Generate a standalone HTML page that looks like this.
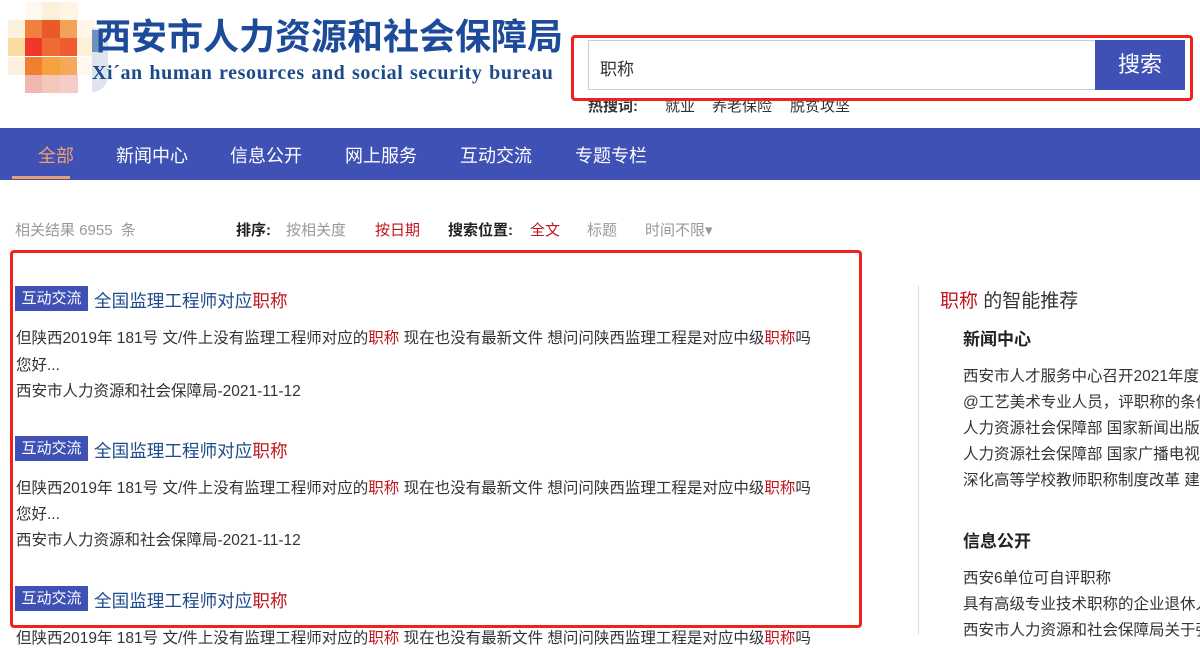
<!DOCTYPE html>
<html><head><meta charset="utf-8"><style>
*{margin:0;padding:0;box-sizing:border-box}
body{width:1200px;height:635px;overflow:hidden;background:#fff;font-family:"Liberation Sans","Noto Sans CJK SC",sans-serif;position:relative;color:#333}
.a{position:absolute;white-space:nowrap}
.c{position:absolute;width:18px;height:18px}
.nav{position:absolute;left:0;top:128px;width:1200px;height:52px;background:#3f51b5}
.nav span{position:absolute;top:14px;font-size:18px;color:#fff}
.tag{position:absolute;left:15px;width:73px;height:25px;background:#3f51b5;color:#fff;font-size:15px;line-height:25px;text-align:center}
.tt{position:absolute;left:94px;font-size:17.6px;color:#1e4a8a;white-space:nowrap}
.r{color:#c0141c}
.p{position:absolute;left:16px;font-size:15.5px;color:#333;white-space:nowrap}
.rl{position:absolute;left:963px;font-size:15.5px;color:#333}
.f{position:absolute;top:219px;font-size:15px;color:#999;white-space:nowrap}
</style></head><body>
<div class="c" style="left:25px;top:2px;background:#fff8f0"></div>
<div class="c" style="left:42px;top:2px;background:#fdf0d8"></div>
<div class="c" style="left:60px;top:2px;background:#fff4e4"></div>
<div class="c" style="left:8px;top:20px;background:#fdf0dc"></div>
<div class="c" style="left:25px;top:20px;background:#f08040"></div>
<div class="c" style="left:42px;top:20px;background:#e85a2a"></div>
<div class="c" style="left:60px;top:20px;background:#f2a258"></div>
<div class="c" style="left:77px;top:20px;background:#fff6e8"></div>
<div class="c" style="left:8px;top:38px;background:#f9dca0"></div>
<div class="c" style="left:25px;top:38px;background:#f0382a"></div>
<div class="c" style="left:42px;top:38px;background:#f06a34"></div>
<div class="c" style="left:60px;top:38px;background:#f05a30"></div>
<div class="c" style="left:77px;top:38px;background:#fdf0d8"></div>
<div class="c" style="left:8px;top:57px;background:#fdf0e0"></div>
<div class="c" style="left:25px;top:57px;background:#f08030"></div>
<div class="c" style="left:42px;top:57px;background:#f6a040"></div>
<div class="c" style="left:60px;top:57px;background:#f4a858"></div>
<div class="c" style="left:77px;top:57px;background:#fff8f0"></div>
<div class="c" style="left:25px;top:75px;background:#f2b8b0"></div>
<div class="c" style="left:42px;top:75px;background:#f4c8b8"></div>
<div class="c" style="left:60px;top:75px;background:#f4ccc8"></div>
<div style="position:absolute;left:92px;top:28px;width:16px;height:64px;background:#dde4ee;border-radius:0 16px 16px 0"></div>
<div style="position:absolute;left:92px;top:30px;width:8px;height:22px;background:#7090c0"></div>
<div class="a" style="left:95px;top:13px;font-size:36px;font-weight:bold;color:#1e4a9a;line-height:48px">西安市人力资源和社会保障局</div>
<div class="a" style="left:92px;top:61px;font-family:'Liberation Serif',serif;font-size:20px;font-weight:bold;color:#1e4a8a;line-height:24px;letter-spacing:0.6px;word-spacing:1px">Xi´an human resources and social security bureau</div>
<div class="a" style="left:588px;top:95px;font-size:15px;color:#333;font-weight:bold">热搜词:</div>
<div class="a" style="left:665px;top:95px;font-size:15px;color:#333">就业</div>
<div class="a" style="left:712px;top:95px;font-size:15px;color:#333">养老保险</div>
<div class="a" style="left:790px;top:95px;font-size:15px;color:#333">脱贫攻坚</div>
<div style="position:absolute;left:571px;top:35px;width:622px;height:66px;border:3px solid #f0221a;border-radius:4px;background:#fff"></div>
<div style="position:absolute;left:588px;top:40px;width:507px;height:50px;border:1px solid #ccc;border-right:none;background:#fff"></div>
<div class="a" style="left:600px;top:55px;font-size:17px;color:#333">职称</div>
<div style="position:absolute;left:1095px;top:40px;width:90px;height:50px;background:#3f51b5;color:#fff;font-size:22px;line-height:50px;text-align:center">搜索</div>
<div class="nav">
<span style="left:38px;color:#f0a070">全部</span>
<span style="left:116px">新闻中心</span>
<span style="left:230px">信息公开</span>
<span style="left:345px">网上服务</span>
<span style="left:460px">互动交流</span>
<span style="left:575px">专题专栏</span>
<div style="position:absolute;left:12px;top:48px;width:58px;height:3px;background:#e8a070"></div>
</div>
<div class="f" style="left:15px">相关结果 6955&nbsp; 条</div>
<div class="f" style="left:236px;color:#222;font-weight:bold">排序:</div>
<div class="f" style="left:286px">按相关度</div>
<div class="f" style="left:375px;color:#c0141c">按日期</div>
<div class="f" style="left:448px;color:#222;font-weight:bold">搜索位置:</div>
<div class="f" style="left:530px;color:#c0141c">全文</div>
<div class="f" style="left:587px">标题</div>
<div class="f" style="left:645px">时间不限▾</div>
<div class="tag" style="top:286px">互动交流</div>
<div class="tt" style="top:288px">全国监理工程师对应<span class="r">职称</span></div>
<div class="p" style="top:326px">但陕西2019年 181号 文/件上没有监理工程师对应的<span class="r">职称</span> 现在也没有最新文件 想问问陕西监理工程是对应中级<span class="r">职称</span>吗</div>
<div class="p" style="top:353px">您好...</div>
<div class="p" style="top:379px">西安市人力资源和社会保障局-2021-11-12</div>
<div class="tag" style="top:436px">互动交流</div>
<div class="tt" style="top:438px">全国监理工程师对应<span class="r">职称</span></div>
<div class="p" style="top:476px">但陕西2019年 181号 文/件上没有监理工程师对应的<span class="r">职称</span> 现在也没有最新文件 想问问陕西监理工程是对应中级<span class="r">职称</span>吗</div>
<div class="p" style="top:502px">您好...</div>
<div class="p" style="top:528px">西安市人力资源和社会保障局-2021-11-12</div>
<div class="tag" style="top:586px">互动交流</div>
<div class="tt" style="top:588px">全国监理工程师对应<span class="r">职称</span></div>
<div class="p" style="top:626px">但陕西2019年 181号 文/件上没有监理工程师对应的<span class="r">职称</span> 现在也没有最新文件 想问问陕西监理工程是对应中级<span class="r">职称</span>吗</div>
<div style="position:absolute;left:10px;top:250px;width:852px;height:378px;border:3px solid #f0221a;border-radius:4px"></div>
<div style="position:absolute;left:918px;top:285px;width:1px;height:350px;background:#ddd"></div>
<div class="a" style="left:940px;top:286px;font-size:19px;color:#333"><span class="r">职称</span> 的智能推荐</div>
<div class="a" style="left:963px;top:325px;font-size:17px;font-weight:bold;color:#222">新闻中心</div>
<div class="rl a" style="top:364px">西安市人才服务中心召开2021年度</div>
<div class="rl a" style="top:390px">@工艺美术专业人员，评职称的条件</div>
<div class="rl a" style="top:416px">人力资源社会保障部 国家新闻出版署</div>
<div class="rl a" style="top:442px">人力资源社会保障部 国家广播电视总</div>
<div class="rl a" style="top:468px">深化高等学校教师职称制度改革 建立</div>
<div class="a" style="left:963px;top:527px;font-size:17px;font-weight:bold;color:#222">信息公开</div>
<div class="rl a" style="top:566px">西安6单位可自评职称</div>
<div class="rl a" style="top:592px">具有高级专业技术职称的企业退休人员</div>
<div class="rl a" style="top:618px">西安市人力资源和社会保障局关于强化</div>
</body></html>
